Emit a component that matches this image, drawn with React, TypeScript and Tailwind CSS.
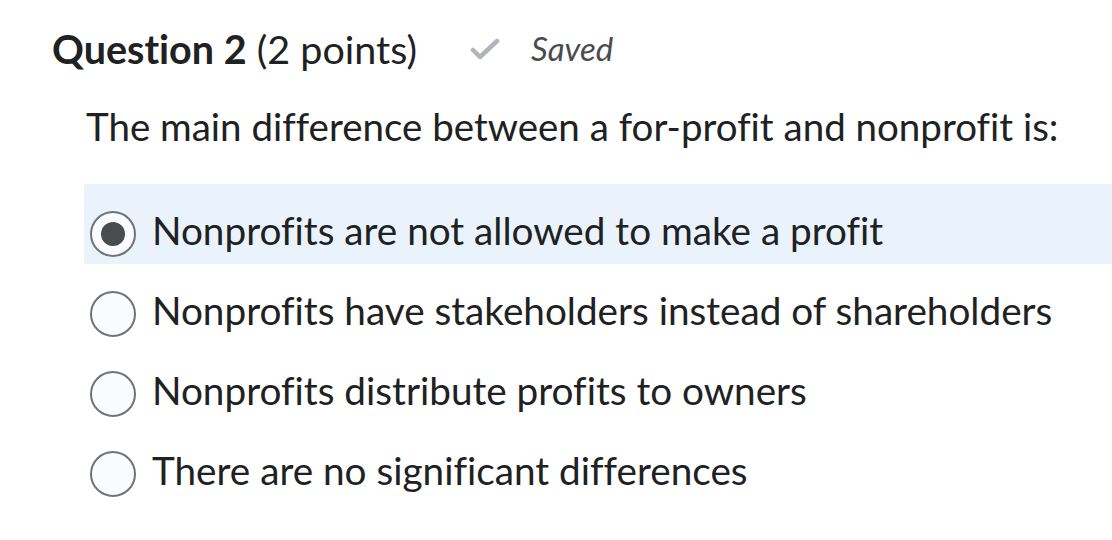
import { useState } from 'react';

const options = [
  'Nonprofits are not allowed to make a profit',
  'Nonprofits have stakeholders instead of shareholders',
  'Nonprofits distribute profits to owners',
  'There are no significant differences',
];

export default function App() {
  const [selected, setSelected] = useState(0);

  return (
    <div className="w-[1112px] h-[540px] bg-white text-[#202122] font-['Lato','Noto_Sans',sans-serif] [font-variant-ligatures:none] overflow-hidden">
      <div className="pl-[52px] pt-[26px] flex items-center h-[46px] box-content">
        <h2 className="text-[39.5px] leading-none">
          <span className="font-bold">Question 2</span> <span>(2 points)</span>
        </h2>
        <svg className="ml-[53px] w-[30px] h-[22px]" viewBox="0 0 30 22" fill="none">
          <path d="M3 12 L10 19 L27 3" stroke="#b1b5b9" strokeWidth="4.5" strokeLinecap="round" strokeLinejoin="round" />
        </svg>
        <span className="ml-[31px] text-[33px] italic text-[#494c4e]">Saved</span>
      </div>

      <p className="pl-[86px] mt-[26px] text-[38.5px] leading-[56px]">
        The main difference between a for-profit and nonprofit is:
      </p>

      <div className="mt-[30px] ml-[84px] flex flex-col">
        {options.map((o, i) => (
          <label
            key={o}
            className={`h-[80px] flex items-start pl-[6px] cursor-pointer ${selected === i ? 'bg-[#eaf3fc]' : ''}`}
            onClick={() => setSelected(i)}
          >
            <span className="w-[46px] h-[46px] mt-[27px] rounded-full border-2 border-[#6e7477] bg-[#f9fbff] flex items-center justify-center shrink-0">
              {selected === i && <span className="w-[24px] h-[24px] rounded-full bg-[#494c4e]" />}
            </span>
            <span className="ml-[16px] mt-[27px] text-[38.7px] leading-none">{o}</span>
          </label>
        ))}
      </div>
    </div>
  );
}
